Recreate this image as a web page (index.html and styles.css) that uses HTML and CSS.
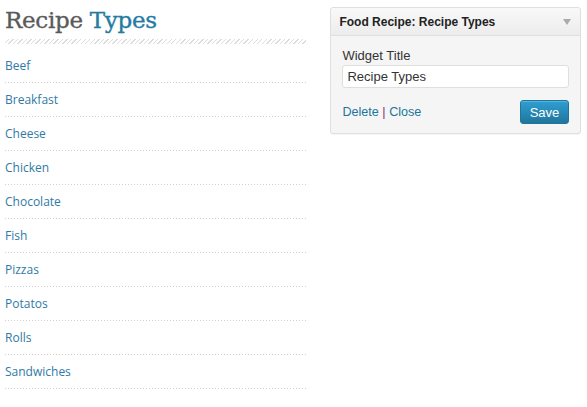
FILE: index.html
```html
<!DOCTYPE html>
<html>
<head>
<meta charset="utf-8">
<link rel="stylesheet" href="styles.css">
</head>
<body>
<div class="page">
  <section class="recipes">
    <h2 class="title"><span class="t1">Recipe</span> <span class="t2">Types</span></h2>
    <div class="hatch"></div>
    <ul class="list">
      <li><a>Beef</a></li>
      <li><a>Breakfast</a></li>
      <li><a>Cheese</a></li>
      <li><a>Chicken</a></li>
      <li><a>Chocolate</a></li>
      <li><a>Fish</a></li>
      <li><a>Pizzas</a></li>
      <li><a>Potatos</a></li>
      <li><a>Rolls</a></li>
      <li><a>Sandwiches</a></li>
    </ul>
  </section>
  <aside class="widget">
    <div class="widget-head">
      <span class="widget-name">Food Recipe: Recipe Types</span>
      <span class="arrow"></span>
    </div>
    <div class="widget-body">
      <label class="lbl">Widget Title</label>
      <div class="input">Recipe Types</div>
      <div class="actions">
        <div class="links"><a>Delete</a> <span class="sep">|</span> <a>Close</a></div>
        <button class="save">Save</button>
      </div>
    </div>
  </aside>
</div>
</body>
</html>
```

FILE: styles.css
```css
html, body { margin: 0; padding: 0; background: #fff; }
.page {
  display: flex;
  align-items: flex-start;
  padding: 0 6px 0 5px;
  gap: 24px;
}
.recipes { width: 302px; }
.title {
  margin: 0;
  padding-top: 5px;
  height: 34px;
  font-family: "DejaVu Serif", "Liberation Serif", serif;
  font-weight: normal;
  font-size: 23px;
  line-height: 30px;
  letter-spacing: -0.3px;
  -webkit-text-stroke: 0.35px;
}
.t1 { color: #5a5a5a; }
.t2 { color: #237aa3; }
.hatch {
  height: 5px;
  background: repeating-linear-gradient(135deg, #fff 0 2.2px, #dcdcdc 2.2px 3.2px);
  margin-bottom: 5px;
}
.list { list-style: none; margin: 0; padding: 0; }
.list li {
  height: 34px;
  display: flex;
  align-items: center;
  font-family: "Open Sans", "Noto Sans", sans-serif;
  font-size: 12px;
  color: #2f7aa6;
  background-image: repeating-linear-gradient(90deg, #cfcfcf 0 1px, transparent 1px 3px);
  background-size: 100% 1px;
  background-position: left bottom;
  background-repeat: no-repeat;
  padding-bottom: 1px;
  box-sizing: border-box;
}
.widget {
  margin-top: 7px;
  width: 249px;
  border: 1px solid #dfdfdf;
  border-radius: 3px;
  background: #f5f5f5;
  box-shadow: 0 1px 1px rgba(0,0,0,0.04);
  font-family: "Liberation Sans", Arial, sans-serif;
  font-size: 13px;
}
.widget-head {
  height: 27px;
  display: flex;
  align-items: center;
  justify-content: space-between;
  padding: 0 9px 0 8px;
  background: linear-gradient(#f9f9f9, #ececec);
  border-bottom: 1px solid #dfdfdf;
  border-radius: 3px 3px 0 0;
}
.widget-name { font-weight: bold; font-size: 12px; color: #222; }
.arrow {
  width: 0; height: 0;
  border-left: 4px solid transparent;
  border-right: 4px solid transparent;
  border-top: 6px solid #aaa;
}
.widget-body { padding: 12px 11px 9px 11px; }
.lbl { display: block; color: #333; line-height: 15px; margin-bottom: 2px; }
.input {
  height: 21px;
  line-height: 21px;
  border: 1px solid #dfdfdf;
  border-radius: 3px;
  background: #fff;
  padding: 0 4px;
  color: #333;
}
.actions {
  margin-top: 12px;
  display: flex;
  align-items: center;
  justify-content: space-between;
}
.links { color: #21759b; font-size: 12.6px; }
.links a { color: #21759b; }
.sep { color: #8a2b82; }
.save {
  width: 49px;
  height: 24px;
  border: 1px solid #21759b;
  border-radius: 3px;
  background: linear-gradient(#2e9fd2, #21759b);
  color: #fff;
  font-family: "Liberation Sans", Arial, sans-serif;
  font-size: 13px;
  padding: 0;
  box-shadow: inset 0 1px 0 rgba(120,200,230,0.5);
}
```
